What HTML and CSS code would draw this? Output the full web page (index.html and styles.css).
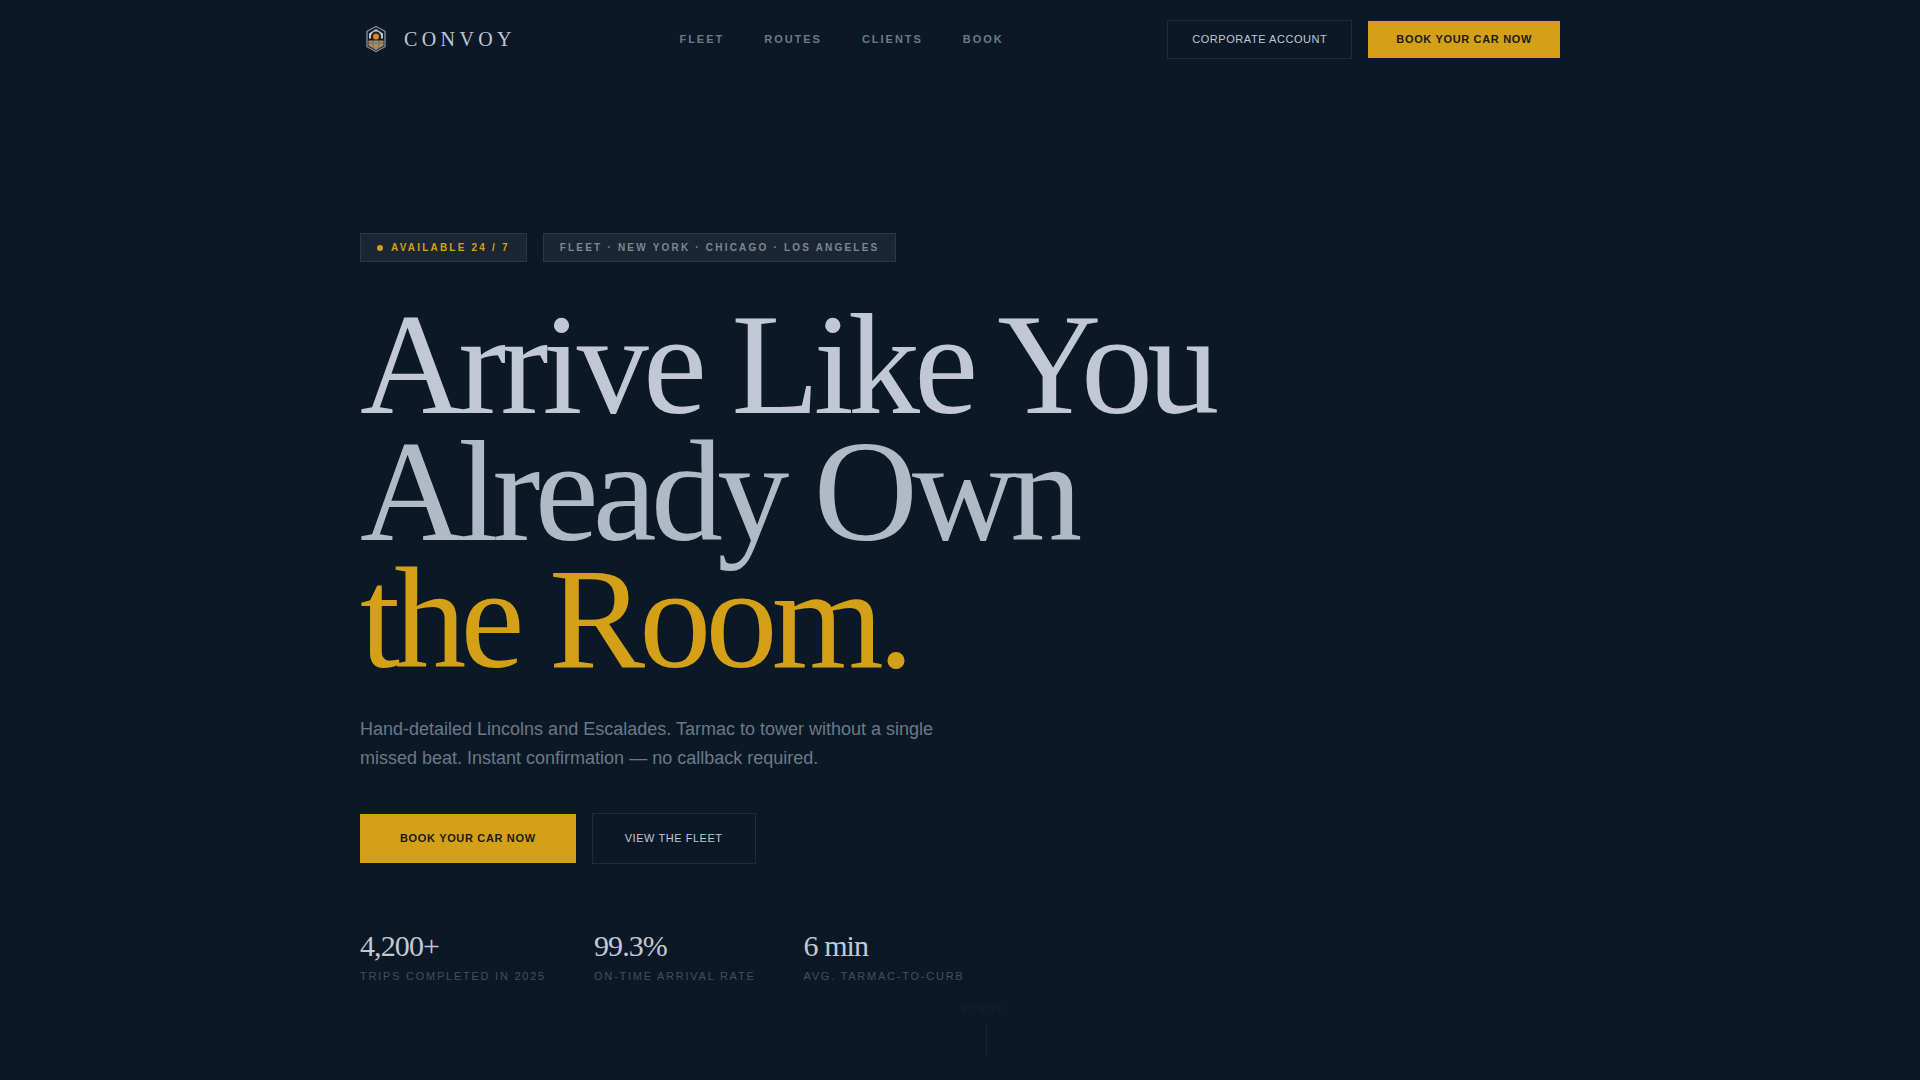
FILE: index.html
```html
<!DOCTYPE html>
<html lang="en">
<head>
<meta charset="utf-8">
<meta name="viewport" content="width=device-width, initial-scale=1">
<title>Convoy</title>
<link rel="stylesheet" href="styles.css">
</head>
<body>
<header class="site-header">
  <div class="container header-row">
    <a class="brand" href="#">
      <svg class="brand-mark" viewBox="0 0 32 32" aria-hidden="true">
        <path d="M16 3.5 25 8.3V23.7L16 28.5 7 23.7V8.3Z" fill="#111a26" stroke="#8b9099" stroke-width="1.3"/>
        <path d="M9 15.500V10.500L16 6 23 10.500V15.500H21V13.500A5 5 0 0 0 11 13.500V15.500Z" fill="#c0c6d4"/>
        <circle cx="16" cy="13.600" r="4" fill="#3a2a1a"/>
        <circle cx="16" cy="13.600" r="2.900" fill="#d68c1e"/>
        <path d="M8.500 17.500H23.500V22.800L16 27 8.500 22.800Z" fill="#a58e66"/>
        <path d="M8.500 20H23.500M13 17.500V25.300M19 17.500V25.300" stroke="#6b5f48" stroke-width="0.700"/>
      </svg>
      <span class="brand-name">CONVOY</span>
    </a>
    <nav class="nav" aria-label="Main">
      <a href="#fleet">FLEET</a>
      <a href="#routes">ROUTES</a>
      <a href="#clients">CLIENTS</a>
      <a href="#book">BOOK</a>
    </nav>
    <div class="actions">
      <button type="button" class="btn btn-ghost">CORPORATE ACCOUNT</button>
      <button type="button" class="btn btn-gold">BOOK YOUR CAR NOW</button>
    </div>
  </div>
</header>
<main class="hero">
  <div class="container">
    <div class="tags">
      <span class="tag tag-live"><span class="dot"></span>AVAILABLE 24 / 7</span>
      <span class="tag">FLEET · NEW YORK · CHICAGO · LOS ANGELES</span>
    </div>
    <h1 class="title">
      <span class="line">Arrive Like You</span>
      <span class="line line-steel">Already Own</span>
      <span class="line line-gold">the Room.</span>
    </h1>
    <p class="lead">Hand-detailed Lincolns and Escalades. Tarmac to tower without a single missed beat. Instant confirmation — no callback required.</p>
    <div class="actions">
      <button type="button" class="btn btn-gold btn-large">BOOK YOUR CAR NOW</button>
      <button type="button" class="btn btn-ghost btn-large">VIEW THE FLEET</button>
    </div>
    <dl class="stats">
      <div class="stat"><dt>TRIPS COMPLETED IN 2025</dt><dd>4,200+</dd></div>
      <div class="stat"><dt>ON-TIME ARRIVAL RATE</dt><dd>99.3%</dd></div>
      <div class="stat"><dt>AVG. TARMAC-TO-CURB</dt><dd>6 min</dd></div>
    </dl>
  </div>
  <div class="scroll-cue"><span>SCROLL</span><span class="scroll-line"></span></div>
</main>
</body>
</html>
```
FILE: styles.css
```css
* { box-sizing: border-box; }

:root {
  --bg: #0b1927;
  --gold: #d4a017;
  --silver: #c2c8d3;
  --muted: #6b7888;
  --serif: "Liberation Serif", "Times New Roman", serif;
  --sans: "Liberation Sans", Arial, sans-serif;
}

body {
  margin: 0;
  background: var(--bg);
  color: var(--silver);
  font-family: var(--sans);
}

a { color: inherit; text-decoration: none; }

.container {
  width: 100%;
  max-width: 1200px;
  margin: 0 auto;
}

.header-row {
  display: flex;
  align-items: center;
  justify-content: space-between;
  padding: 20px 0;
}

.brand, .nav { padding-bottom: 2px; }
.brand { display: flex; align-items: center; gap: 12px; }
.brand-mark { width: 32px; height: 32px; }
.brand-name {
  font-family: var(--serif);
  font-size: 20px;
  line-height: 24px;
  letter-spacing: 0.22em;
}

.nav {
  display: flex;
  gap: 40px;
  font-size: 11px;
  font-weight: 700;
  letter-spacing: 0.18em;
  color: var(--muted);
}

.actions { display: flex; align-items: center; gap: 16px; }

.btn {
  padding: 12px 24px;
  border: 0;
  font-family: var(--sans);
  font-size: 11px;
  line-height: 13px;
  cursor: pointer;
}
.btn-ghost {
  border: 1px solid #1f2b39;
  background: transparent;
  color: var(--silver);
  letter-spacing: 0.05em;
}
.btn-gold {
  padding: 12px 28px;
  background: var(--gold);
  color: #1b1b16;
  font-weight: 700;
  letter-spacing: 0.06em;
}
.btn-large { padding: 18px 32px; }
.btn-gold.btn-large { padding: 18px 40px; }

.hero {
  position: relative;
  min-height: calc(100vh - 79px);
  padding: 154px 0 96px;
}

.tags { display: flex; gap: 16px; }
.tag {
  display: flex;
  align-items: center;
  gap: 8px;
  padding: 8px 16px;
  border: 1px solid #2b3744;
  background: #1a2633;
  color: #7a8794;
  font-size: 10px;
  font-weight: 700;
  line-height: 11px;
  letter-spacing: 0.22em;
}
.tag-live { color: var(--gold); }
.dot { width: 6px; height: 6px; border-radius: 50%; background: var(--gold); }

.title {
  margin: 39px 0 33px;
  font-family: var(--serif);
  font-size: 144px;
  font-weight: 400;
  line-height: 127px;
  letter-spacing: -0.04em;
}
.line { display: block; }
.line-steel { color: #b0bac4; }
.line-gold { color: var(--gold); }

.lead {
  max-width: 580px;
  margin: 0 0 40px;
  color: var(--muted);
  font-size: 18px;
  line-height: 29px;
}

.stats { display: flex; gap: 48px; margin: 66px 0 0; }
.stat { display: flex; flex-direction: column-reverse; gap: 8px; }
.stat dt {
  color: #434e5b;
  font-size: 11px;
  line-height: 13px;
  letter-spacing: 0.16em;
}
.stat dd {
  margin: 0;
  font-family: var(--serif);
  font-size: 30px;
  line-height: 32px;
  letter-spacing: -0.03em;
}

.scroll-cue {
  position: absolute;
  bottom: 24px;
  left: 50%;
  display: flex;
  flex-direction: column;
  align-items: center;
  gap: 8px;
  color: #122131;
  font-size: 10px;
  line-height: 12px;
  letter-spacing: 2px;
}
.scroll-line { width: 1px; height: 32px; background: #182532; }
```
